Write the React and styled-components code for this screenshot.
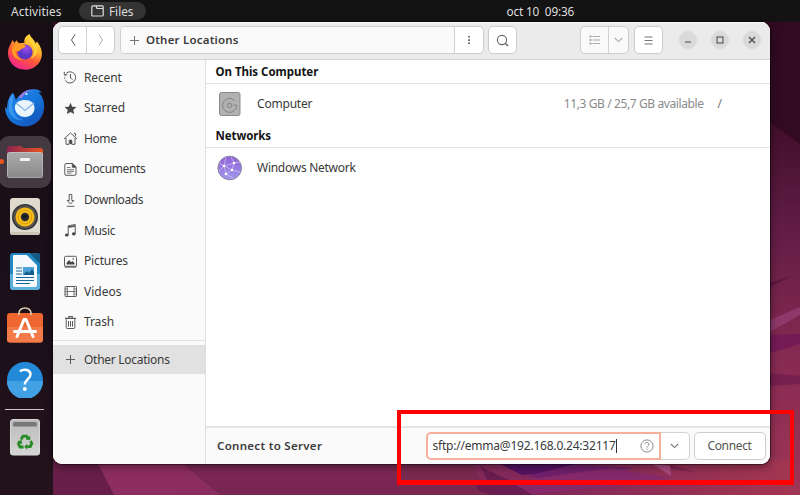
import React from "react";
import styled, { createGlobalStyle } from "styled-components";

const Global = createGlobalStyle`
  * { box-sizing: border-box; }
  body { margin: 0; overflow: hidden; font-family: "Noto Sans", "Open Sans", sans-serif; font-size: 12px; color: #3a3a3a; }
  svg { display: block; flex: none; }
`;

const Desktop = styled.div`
  position: relative;
  width: 800px;
  height: 495px;
  overflow: hidden;
  display: flex;
  flex-direction: column;
`;
const Wallpaper = styled.svg`
  position: absolute;
  inset: 0;
`;
const TopBar = styled.header`
  position: relative;
  display: grid;
  grid-template-columns: 79px 67px 1fr;
  height: 22px;
  flex: none;
  align-items: center;
  background: #131313;
  color: #dedede;
`;
const Label = styled.span`
  font-size: ${(p) => p.$size || 12}px;
  font-weight: ${(p) => p.$weight || 400};
  letter-spacing: ${(p) => p.$track || 0}px;
  color: ${(p) => p.$color || "inherit"};
  line-height: 18px;
  white-space: pre;
`;
const Activities = styled.div`
  padding-left: 11px;
  display: flex;
`;
const AppMenu = styled.div`
  height: 18px;
  border-radius: 9px;
  background: #343434;
  display: flex;
  align-items: center;
  gap: 5px;
  padding-left: 12px;
`;
const Clock = styled.div`
  padding-left: 360.5px;
  margin-top: -1px;
  display: flex;
`;
const Stage = styled.div`
  position: relative;
  display: flex;
  flex: 1;
`;
const Dock = styled.nav`
  width: 53px;
  height: 473px;
  padding-top: 3px;
  background: linear-gradient(#190e15, #1b0f19 55%, #24131d);
  display: flex;
  flex-direction: column;
`;
const DockCell = styled.div`
  position: relative;
  height: 54.7px;
  width: 51px;
  display: grid;
  place-items: center;
  padding-right: 1px;
`;
const ActiveTile = styled(DockCell)`
  &::before {
    content: "";
    position: absolute;
    inset: 2px 0 1px -1px;
    border-radius: 10px;
    background: #443940;
  }
  &::after {
    content: "";
    position: absolute;
    left: -1px;
    top: 25px;
    width: 5px;
    height: 5px;
    border-radius: 50%;
    background: #e95420;
  }
  svg { position: relative; }
`;
const DockRule = styled.div`
  height: 1px;
  width: 39px;
  margin: 1px 0 0 5px;
  background: #cbc5c8;
`;

const Window = styled.main`
  width: 717px;
  height: 442px;
  border-radius: 9px;
  overflow: hidden;
  display: grid;
  grid-template-rows: 38px 1fr;
  background: #fff;
  box-shadow: 0 0 0 1px rgba(0, 0, 0, 0.4), 0 2px 9px 1px rgba(0, 0, 0, 0.4);
`;
const HeaderBar = styled.div`
  display: flex;
  align-items: center;
  padding: 0 9.5px 1px 5px;
  background: #ebebeb;
  border-bottom: 1px solid #d3d3d3;
  box-shadow: inset 0 1px #f8f8f8;
`;
const Group = styled.div`
  display: flex;
  width: ${(p) => p.$w}px;
  height: 28px;
  margin-left: ${(p) => p.$ml || 0}px;
  border: 1px solid #cdcdcd;
  border-radius: 5px;
  background: ${(p) => (p.$muted ? "#fafafa" : "#fff")};
  overflow: hidden;
`;
const Segment = styled.button`
  all: unset;
  box-sizing: border-box;
  width: ${(p) => (p.$w ? p.$w + "px" : "auto")};
  flex: ${(p) => (p.$w ? "none" : 1)};
  display: flex;
  align-items: center;
  justify-content: center;
  background: ${(p) => p.$bg || "transparent"};
  & + & { border-left: 1px solid #d1d1d1; }
`;
const PathSegment = styled(Segment)`
  justify-content: flex-start;
  gap: 6px;
  padding-left: 8px;
`;
const WindowControls = styled.div`
  display: flex;
  gap: 14px;
  margin-left: auto;
`;
const RoundButton = styled.button`
  all: unset;
  width: 18px;
  height: 18px;
  border-radius: 50%;
  background: #dadada;
  display: grid;
  place-items: center;
`;

const Body = styled.div`
  display: grid;
  grid-template-columns: 153px 1fr;
  min-height: 0;
`;
const Sidebar = styled.aside`
  padding-top: 2.4px;
  background: #fafafa;
  border-right: 1px solid #dedede;
`;
const Place = styled.div`
  height: ${(p) => (p.$active ? 29 : 30.6)}px;
  display: flex;
  align-items: center;
  gap: 6px;
  padding-left: 10px;
  background: ${(p) => (p.$active ? "#e1e1e1" : "transparent")};
`;
const SideRule = styled.div`
  height: 1px;
  margin: 2.6px 0 4px;
  background: #e4e4e4;
`;
const Content = styled.section`
  display: grid;
  grid-template-rows: 24px 40px 24px 40px 1fr 38px;
  min-width: 0;
`;
const Heading = styled.div`
  display: flex;
  align-items: center;
  padding-left: 9.5px;
  border-bottom: 1px solid #e3e3e3;
`;
const Location = styled.div`
  display: flex;
  align-items: center;
  padding-left: 11px;
`;
const LocationName = styled.div`
  display: flex;
  margin-left: 14px;
`;
const Capacity = styled.div`
  display: flex;
  gap: 14px;
  margin: 0 48px 0 auto;
`;
const ServerBar = styled.footer`
  grid-row: 6;
  display: flex;
  align-items: center;
  padding: 0 4.5px 0 11px;
  background: #fafafa;
  border-top: 2px solid #e5e5e5;
`;
const AddressGroup = styled.div`
  display: flex;
  width: 264px;
  height: 28px;
  margin-left: auto;
`;
const Address = styled.div`
  width: 235px;
  display: flex;
  align-items: center;
  padding: 0 5px 0 5px;
  background: #fff;
  border: 2px solid #f5b09b;
  border-radius: 5px 0 0 5px;
`;
const Caret = styled.i`
  width: 1px;
  height: 14px;
  background: #333;
`;
const Push = styled.div`
  margin-left: auto;
`;
const DropButton = styled.button`
  all: unset;
  flex: 1;
  box-sizing: border-box;
  display: grid;
  place-items: center;
  background: #fff;
  border: 1px solid #d1d1d1;
  border-left: 0;
  border-radius: 0 5px 5px 0;
`;
const Highlight = styled.div`
  position: absolute;
  left: 397px;
  top: 410px;
  width: 397px;
  height: 75px;
  border: solid #fe0000;
  border-width: 4px 4px 5px;
`;

const Glyph = ({ children, size = 15, w, h, color = "#464646", sw = 1 }) => (
  <svg width={w || size} height={h || size} viewBox={`0 0 ${w || size} ${h || size}`} fill="none" stroke={color} strokeWidth={sw}>
    {children}
  </svg>
);

const placeIcons = {
  Recent: (
    <>
      <path d="M3.2 3.3A5.6 5.6 0 1 1 3 11.3" />
      <path d="M2.8 11A5.6 5.6 0 0 1 2.6 4.5" strokeDasharray="1.3 1.2" />
      <path d="M1.3 1.8v3h3M7.500 4v4l2 1.400" />
    </>
  ),
  Starred: <path fill="#464646" stroke="none" d="m7.500 1.800 1.700 3.900 4.200.4-3.200 2.800 1 4.200-3.700-2.200-3.700 2.200 1-4.200-3.200-2.800 4.200-.4z" />,
  Home: (
    <>
      <path d="M1 8 7.500 1.900 14 8M3 7v6.300h3.200V9.200h2.600v4.100H12V7" />
      <path d="M10.800 2.300h1.600v3" />
      <path d="M8.800 9h-2v4h2z" fill="#464646" stroke="none" />
    </>
  ),
  Documents: (
    <>
      <path d="M3 1.500h6.500l3.500 3.300v7.200a1.300 1.300 0 0 1-1.300 1.300H3A1.300 1.300 0 0 1 1.800 12V2.800A1.300 1.300 0 0 1 3 1.500z" />
      <path d="M9.300 1.500v3.700H13z" fill="#464646" />
      <path d="M4 5.500h3.500M4 7.700h7M4 9.400h7M4 11.100h4.500" strokeWidth=".8" />
    </>
  ),
  Downloads: <path d="M6.200 1.500h2.600v6h2L7.500 11 4.200 7.500h2zM3.800 13.300h7.600" />,
  Music: (
    <>
      <path d="M5.200 12V2.800l7-1.300v9.200" />
      <path d="M5.200 4.200l7-1.300" strokeWidth="1.800" />
      <ellipse cx="3.800" cy="12" rx="1.900" ry="1.600" fill="#464646" stroke="none" />
      <ellipse cx="10.800" cy="10.800" rx="1.900" ry="1.600" fill="#464646" stroke="none" />
    </>
  ),
  Pictures: (
    <>
      <rect x="1.500" y="2.300" width="12" height="10" rx="1.200" />
      <path d="M1.500 13h12" strokeWidth="1.200" />
      <path d="M3.500 10.500V9l2.600-3 2 2.200L9.600 7l2 2.200v1.300z" fill="#464646" stroke="none" />
      <circle cx="10.200" cy="5" r=".8" fill="#464646" stroke="none" />
    </>
  ),
  Videos: (
    <>
      <rect x="2" y="2.500" width="11.500" height="10" rx=".6" />
      <path d="M4.400 2.500v10M11 2.500v10M4.400 7.500H11M2 5h2.400M2 7.500h2.400M2 10h2.400M11 5h2.500M11 7.500h2.500M11 10h2.500" strokeWidth=".8" />
    </>
  ),
  Trash: (
    <>
      <path d="M3.200 4.200v8.300q0 1 1 1h6.600q1 0 1-1V4.200M5.500 6v5.600M7.500 6v5.600M9.500 6v5.600" />
      <path d="M2 3.400h11M5.800 2.800V1.500h3.400v1.300" strokeWidth="1.200" />
    </>
  ),
  "Other Locations": <path d="M3 7.500h9M7.500 3v9" />,
};

const places = [
  ["Recent", -0.15],
  ["Starred", -0.05],
  ["Home", -0.4],
  ["Documents", -0.38],
  ["Downloads", -0.42],
  ["Music", -0.35],
  ["Pictures", -0.15],
  ["Videos", 0],
  ["Trash", -0.1],
];

const Chevron = ({ color = "#777" }) => (
  <Glyph w={9} h={6} color={color} sw={1.1}><path d="m.8 1 3.700 3.600L8.200 1" /></Glyph>
);

const Firefox = () => (
  <svg width="36" height="38" viewBox="0 0 36 38">
    <defs>
      <linearGradient id="ffBody" x1=".8" y1="0" x2=".25" y2="1">
        <stop offset="0" stopColor="#fff04a" /><stop offset=".35" stopColor="#ffb02a" /><stop offset=".62" stopColor="#ff553a" /><stop offset="1" stopColor="#f0209a" />
      </linearGradient>
      <radialGradient id="ffGlobe" cx=".6" cy=".25"><stop offset="0" stopColor="#a34df0" /><stop offset="1" stopColor="#5a38c4" /></radialGradient>
    </defs>
    <path fill="url(#ffBody)" d="M22.500 1c1 3.500 5 5.500 6 9.500l1.500-2c4 5 5.500 10 4.700 15C33 31.500 26.500 36.700 18.300 36.700 8.500 36.700 1 29.500 1 20c0-4 1.200-7 3-9.500L5.500 7l2 3 2-2.800c1 1.500 1 2 3 3l5-.5C16.500 5.500 19.500 2.500 22.500 1z" />
    <circle cx="18" cy="19" r="7.600" fill="url(#ffGlobe)" />
    <path fill="#ff9b20" d="M5 15c3-4 6-4.500 8.500-3.500 2.500-.7 3.500.5 5 1.500 0 2-4 2.500-5.500 4-1 2-3.500 1.500-4.500 1 .5 5 4 8 8.500 8.500-6 1.500-13-2-12-11.500z" />
    <path fill="#ffd53a" opacity=".85" d="M22 4c-1 6 5 7 5 14 0 4-2 7-5 8 8-1 10-9 7.500-14C27 9 23 8 22 4z" />
  </svg>
);
const Thunderbird = () => (
  <svg width="42" height="40" viewBox="0 -1 42 40">
    <defs><linearGradient id="tbBody" x1="0" y1="0" x2=".8" y2="1"><stop offset="0" stopColor="#2a86e6" /><stop offset=".5" stopColor="#1678df" /><stop offset="1" stopColor="#1453b8" /></linearGradient></defs>
    <path fill="url(#tbBody)" d="M9 5c2 3 2 5 3 7 1-3 4-5 5.500-6C21 2 26 .8 31 1.200c3 .3 5 1.300 6.500 3l-3 .5c5 4 6 10 5.500 16C39 31 31 38.500 20.500 38.500 9 38.500 1 30 1 19l2 2C3 14 5 8 9 5z" />
    <path fill="#59b4ff" d="M9 5c1 7-3 12 1 20 2 5 7 7 11 7-9 2-18-5-16-15 0-5 1-9 4-12z" opacity=".5" />
    <path fill="#9479e4" d="M15 9c3-5 8-8 16-7-5 0-8 1-10 4l-4 5z" />
    <path fill="#e9f4fd" d="M11 18c1-4 5-6 10-6 6 0 9.500 3 9.500 8s-4 9-9.500 9c-6 0-11-5-10-11z" />
    <path fill="none" stroke="#87b4e4" strokeWidth="1.300" d="m12 15 9 7.500L30 15" />
    <path fill="#135cc0" d="M19 31c7 1 12-3 13-10 3 8-4 14-13 14z" opacity=".5" />
    <circle cx="22.500" cy="6" r="1.100" fill="#e5f3ff" />
  </svg>
);
const FilesIcon = () => (
  <svg width="36" height="34" viewBox="0 0 36 34">
    <defs>
      <linearGradient id="fTab"><stop offset="0" stopColor="#8c244f" /><stop offset="1" stopColor="#e95420" /></linearGradient>
      <linearGradient id="fBox" x2="0" y2="1"><stop offset="0" stopColor="#aaa" /><stop offset="1" stopColor="#898989" /></linearGradient>
    </defs>
    <path fill="url(#fTab)" d="M0 4a3 3 0 0 1 3-3h10c2 0 2 2 4 2h16a3 3 0 0 1 3 3v10H0z" />
    <rect y="7" width="36" height="26" rx="3" fill="#c4c4c4" />
    <rect x=".6" y="7.800" width="34.800" height="24.600" rx="2.600" fill="url(#fBox)" />
    <rect x="13" y="13" width="10" height="3" rx="1" fill="#f4f4f4" />
  </svg>
);
const Rhythmbox = () => (
  <svg width="30" height="37" viewBox="0 0 30 37">
    <rect width="30" height="37" rx="3" fill="#dedace" /><rect x=".5" y="34" width="29" height="3" rx="1.500" fill="#c9c4b6" />
    <circle cx="15" cy="19" r="13" fill="#30343a" /><circle cx="15" cy="19" r="11.500" fill="#59554d" />
    <circle cx="15" cy="19" r="9.500" fill="#f5bd18" /><circle cx="15" cy="19" r="6.800" fill="none" stroke="#db9b0c" />
    <circle cx="15" cy="19" r="4.200" fill="#292b2f" /><circle cx="14.500" cy="18.500" r="2" fill="#17191c" />
  </svg>
);
const Writer = () => (
  <svg width="30" height="37" viewBox="0 0 30 37">
    <rect width="30" height="37" rx="3" fill="#2388bf" /><path d="M0 21h30v13a3 3 0 0 1-3 3H3a3 3 0 0 1-3-3z" fill="#5caedb" />
    <path d="M4 2h13l10 10v20a2 2 0 0 1-2 2H4.500a1.500 1.500 0 0 1-1.500-1.500V3q0-1 1-1z" fill="#f7fafc" />
    <path d="M19 0h8a3 3 0 0 1 3 3v8z" fill="#155a85" /><path d="M19 0h-4l15 15v-4z" fill="#2287bd" />
    <path stroke="#17699b" strokeWidth="1.200" d="M6 15h6M6 18h6M6 21h6M6 24.500h18M6 27.500h18M6 30.500h14" />
    <rect x="13" y="14" width="11" height="8" fill="#4fa2d5" /><path d="m13 22 4-4 2 2 3-4 2 3v3z" fill="#12608e" />
  </svg>
);
const Software = () => (
  <svg width="36" height="37" viewBox="0 0 36 37">
    <rect y="6" width="36" height="29.500" rx="3" fill="#ee6630" /><path d="M0 20h36v12.500a3 3 0 0 1-3 3H3a3 3 0 0 1-3-3z" fill="#f37b49" />
    <path d="M12 8V6a6 5 0 0 1 12 0v2" fill="none" stroke="#e2d5b1" strokeWidth="1.600" />
    <path d="m10 29.500 7-17h2l7 17M7.500 24.500h21" fill="none" stroke="#fff" strokeWidth="3" strokeLinejoin="round" strokeLinecap="round" />
  </svg>
);
const Help = () => (
  <svg width="36" height="36" viewBox="0 0 36 36">
    <circle cx="18" cy="18" r="18" fill="#2389d9" /><path d="M0 19h36a18 18 0 0 1-36 0z" fill="#42a1e4" />
    <path d="M12.800 9.200c5-3 10.700-1.200 10.700 3.400 0 4.500-5.800 4.900-5.800 10" fill="none" stroke="#fff" strokeWidth="2.500" /><circle cx="17.800" cy="27" r="1.900" fill="#fff" />
  </svg>
);
const TrashIcon = () => (
  <svg width="30" height="37" viewBox="0 0 30 37">
    <defs><linearGradient id="tBin" x2="0" y2="1"><stop stopColor="#bababa" /><stop offset="1" stopColor="#d5d5d5" /></linearGradient></defs>
    <rect width="30" height="36.500" rx="3.500" fill="#e0e0e0" /><rect x=".6" y=".8" width="28.800" height="35.100" rx="3" fill="url(#tBin)" />
    <rect x="3" y="3" width="24" height="4.500" rx="1.500" fill="#777" />
    <g fill="none" stroke="#258b25" strokeWidth="2.800">
      <path d="m11 20.500 2-3.300h3.500l1.500 2.500M20.500 22l1.300 2.500-1.600 3.200h-3M13.600 28H10l-1.500-3 1.300-2.500" />
    </g>
    <path fill="#258b25" d="m15.800 20.500 4.500.5-.2-4.200zM17.200 24.700v6l-3-3zM7.200 22.500l4.300-1.500.8 4.300z" />
  </svg>
);
const Disk = () => (
  <svg width="26" height="26" viewBox="0 0 26 26">
    <rect x="2.500" y="1.500" width="20.500" height="23" rx="2" fill="#b1b1b1" stroke="#8b8b8b" />
    <g fill="none" stroke="#858585"><path d="M17.600 9.500a7 7 0 1 0 2 4.800q-2-.7-3.500 0" /><circle cx="12.600" cy="14.400" r="2.200" /></g>
  </svg>
);
const Network = () => (
  <svg width="26" height="26" viewBox="0 0 26 26">
    <defs><linearGradient id="net" x2="0" y2="1"><stop stopColor="#9160d6" /><stop offset="1" stopColor="#a099ed" /></linearGradient></defs>
    <circle cx="12.700" cy="13" r="11.800" fill="url(#net)" stroke="#8b83a1" />
    <path d="m2 8 5 3 10-3 6-1M7 11l2 8 6-4 2-7M7 11l8 4 8 2M9 19l7 4M7 11l-5 5M7 11l2-9M17 8l-3-6" fill="none" stroke="#ddd3fa" strokeWidth=".8" opacity=".75" />
    <g fill="#fff"><circle cx="7" cy="11" r="1.300" /><circle cx="17" cy="8" r="1.300" /><circle cx="15" cy="15" r="1.300" /><circle cx="9" cy="19" r="1.300" /></g>
  </svg>
);

export default function App() {
  return (
    <Desktop>
      <Global />
      <Wallpaper width="800" height="495" viewBox="0 0 800 495">
        <defs>
          <linearGradient id="side" x2="0" y2="1"><stop stopColor="#3f0d2b" /><stop offset=".2" stopColor="#390b25" /><stop offset=".45" stopColor="#601c44" /><stop offset=".72" stopColor="#862a52" /><stop offset="1" stopColor="#a03656" /></linearGradient>
          <linearGradient id="base"><stop stopColor="#6c2149" /><stop offset=".1" stopColor="#8d2d60" /><stop offset=".25" stopColor="#8c2d60" /><stop offset=".7" stopColor="#83285a" /><stop offset="1" stopColor="#a23650" /></linearGradient>
        </defs>
        <rect width="800" height="495" fill="url(#side)" />
        <rect y="460" width="790" height="35" fill="url(#base)" />
        <path fill="#671f49" d="M53 460h43l18 35H53z" />
        <path fill="#7a2653" d="M178 460h220l30 35H220z" />
        <path fill="#79294f" d="M390 460h80l20 35h-90z" />
        <path fill="#681c50" d="M480 465c8 8 35 14 52 30h-40c-18-4-21-10-5-15z" />
        <path fill="#541263" d="M500 464h75c-15 6-35 10-53 11z" />
        <path fill="#71206b" d="m575 464 60 4-78 13-30-5z" />
        <path fill="#86296a" d="m510 482 100-14 63 10-58 8-83 8z" />
        <path fill="#aa4b83" d="m650 462 21 14-1-10z" />
        <path fill="#7c2353" d="m670 465 25 7-24-3z" />
        <path fill="#320a22" d="m770 122 30 22V22h-30z" />
        <path fill="#5c173f" d="m770 283 24-8-24 12z" />
        <path fill="#8d396b" d="m770 320 30-13v8l-30 17z" />
        <path fill="#751a54" d="m770 335 30-1v10l-30 9z" />
        <path fill="#762050" d="m770 373 30 3v8l-30 2z" />
      </Wallpaper>
      <TopBar>
        <Activities><Label $size={11.8} $track={0.15}>Activities</Label></Activities>
        <AppMenu>
          <Glyph w={13} h={12} color="#dedede" sw={1.2}><path d="M.8 2q0-1.200 1.200-1.200h3l1 2.700h5.200q1 0 1 1v5.500q0 1-1 1H1.800q-1 0-1-1zM5.500.8h5.700q1 0 1 1v3" /></Glyph>
          <Label $size={11.8}>Files</Label>
        </AppMenu>
        <Clock><Label $size={11.8} $track={-0.18}>{"oct 10  09:36"}</Label></Clock>
      </TopBar>
      <Stage>
        <Dock>
          <DockCell><Firefox /></DockCell>
          <DockCell><Thunderbird /></DockCell>
          <ActiveTile><FilesIcon /></ActiveTile>
          <DockCell><Rhythmbox /></DockCell>
          <DockCell><Writer /></DockCell>
          <DockCell><Software /></DockCell>
          <DockCell><Help /></DockCell>
          <DockRule />
          <DockCell><TrashIcon /></DockCell>
        </Dock>
        <Window>
          <HeaderBar>
            <Group $w={57}>
              <Segment $w={27}><Glyph w={8} h={14} color="#555"><path d="M6 1.500 2.500 7 6 12.500" /></Glyph></Segment>
              <Segment><Glyph w={8} h={14} color="#aaa"><path d="M2 1.500 5.500 7 2 12.500" /></Glyph></Segment>
            </Group>
            <Group $w={364} $ml={5}>
              <PathSegment $bg="#fafafa">
                <Glyph size={11} color="#777"><path d="M1 5.500h9M5.500 1v9" /></Glyph>
                <Label $weight={600} $size={11.5} $track={0.2}>Other Locations</Label>
              </PathSegment>
              <Segment $w={29}><Glyph w={4} h={10}><path d="M2 1v8" strokeWidth="1.600" strokeDasharray="1.600 1.700" /></Glyph></Segment>
            </Group>
            <Group $w={29} $ml={4}>
              <Segment><Glyph size={13} color="#666" sw={1.1}><circle cx="6" cy="6" r="4.600" /><path d="m9.300 9.300 2.700 2.700" strokeWidth="1.600" /></Glyph></Segment>
            </Group>
            <Group $w={49} $ml={63} $muted>
              <Segment $w={27}><Glyph w={11} h={10} color="#aaa"><path d="M3.500 1.500H11M3.500 5H11M3.500 8.500H11" /><path d="M.5 1.500h2M.5 5h2M.5 8.500h2" strokeWidth="2" /></Glyph></Segment>
              <Segment><Chevron color="#aaa" /></Segment>
            </Group>
            <Group $w={29} $ml={5}>
              <Segment><Glyph w={9} h={9} color="#777"><path d="M.5 1h8M.5 4.500h8M.5 8h8" /></Glyph></Segment>
            </Group>
            <WindowControls>
              <RoundButton><Glyph size={8}><path d="M1 6h6" strokeWidth="1" /></Glyph></RoundButton>
              <RoundButton><Glyph size={8}><rect x="1" y="1" width="6" height="6" strokeWidth="1" /></Glyph></RoundButton>
              <RoundButton><Glyph size={8} sw={1.2}><path d="m1 1 6 6M7 1 1 7" /></Glyph></RoundButton>
            </WindowControls>
          </HeaderBar>
          <Body>
            <Sidebar>
              {places.map(([name, track]) => (
                <Place key={name}><Glyph color="#5a5a5a">{placeIcons[name]}</Glyph><Label $track={track}>{name}</Label></Place>
              ))}
              <SideRule />
              <Place $active><Glyph color="#5a5a5a">{placeIcons["Other Locations"]}</Glyph><Label $track={-0.28}>Other Locations</Label></Place>
            </Sidebar>
            <Content>
              <Heading><Label $weight={700} $size={11.5} $track={-0.04} $color="#151515">On This Computer</Label></Heading>
              <Location>
                <Disk /><LocationName><Label $track={-0.2}>Computer</Label></LocationName>
                <Capacity><Label $track={-0.4} $color="#8a8a8a">11,3 GB / 25,7 GB available</Label><Label $color="#777">/</Label></Capacity>
              </Location>
              <Heading><Label $weight={700} $size={11.5} $track={-0.1} $color="#151515">Networks</Label></Heading>
              <Location><Network /><LocationName><Label $track={-0.27}>Windows Network</Label></LocationName></Location>
              <ServerBar>
                <Label $weight={600} $size={11.5} $track={0.3}>Connect to Server</Label>
                <AddressGroup>
                  <Address>
                    <Label $track={-0.21}>sftp://emma@192.168.0.24:32117</Label><Caret />
                    <Push><Glyph size={14} color="#888"><circle cx="7" cy="7" r="6.100" /><path d="M5 5.200c.2-2.400 4-2.200 4 0C9 6.700 7 6.800 7 8.600M7 9.700v1.200" /></Glyph></Push>
                  </Address>
                  <DropButton><Chevron /></DropButton>
                </AddressGroup>
                <Group $w={72} $ml={4}><Segment><Label $track={-0.35} $color="#555">Connect</Label></Segment></Group>
              </ServerBar>
            </Content>
          </Body>
        </Window>
      </Stage>
      <Highlight />
    </Desktop>
  );
}
